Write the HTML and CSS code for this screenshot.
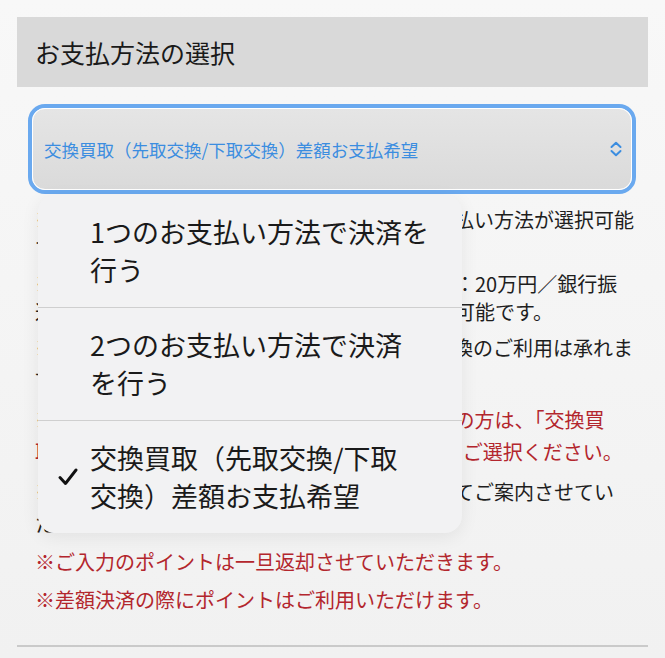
FILE: index.html
```html
<!DOCTYPE html>
<html lang="ja">
<head>
<meta charset="utf-8">
<title>お支払方法の選択</title>
<link rel="stylesheet" href="styles.css">
</head>
<body>
<div class="page">
  <div class="heading">お支払方法の選択</div>

  <div class="select-wrap">
    <div class="select">
      <div class="select-inner">
        <span class="select-value">交換買取（先取交換/下取交換）差額お支払希望</span>
        <svg class="chevrons" width="14" height="16" viewBox="0 0 14 16" aria-hidden="true">
          <path d="M2.5 6 L7 1.8 L11.5 6" fill="none" stroke="#3b8de0" stroke-width="2" stroke-linecap="round" stroke-linejoin="round"/>
          <path d="M2.5 10 L7 14.2 L11.5 10" fill="none" stroke="#3b8de0" stroke-width="2" stroke-linecap="round" stroke-linejoin="round"/>
        </svg>
      </div>
    </div>

    <div class="menu">
      <div class="menu-item">
        <span class="mark"></span>
        <span class="label">1つのお支払い方法で決済を<br>行う</span>
      </div>
      <div class="menu-item">
        <span class="mark"></span>
        <span class="label">2つのお支払い方法で決済<br>を行う</span>
      </div>
      <div class="menu-item">
        <span class="mark">
          <svg width="20" height="18" viewBox="0 0 20 18" aria-hidden="true">
            <path d="M2 9.5 L7.5 15.5 L18 2" fill="none" stroke="#111" stroke-width="2.9" stroke-linecap="round" stroke-linejoin="round"/>
          </svg>
        </span>
        <span class="label">交換買取（先取交換/下取<br>交換）差額お支払希望</span>
      </div>
    </div>
  </div>

  <div class="notes">
    <p>※お客様のご注文の内容に応じて、以下のお支払い方法が選択可能<br>です。</p>
    <p>※ご利用可能な上限金額は、クレジットカード：20万円／銀行振<br>込：上限なし、代金引換：各上限額までご利用可能です。</p>
    <p>※ご注文の内容によっては、先取交換・下取交換のご利用は承れま<br>せん。</p>
    <p class="red wide lead">※交換にて差額のお支払いが必要となるお客様の方は、「交換買<br>取（先取交換/下取交換）差額お支払い希望」をご選択ください。</p>
    <p class="wide">※差額につきましては、ご注文確認後メールにてご案内させてい<br>ただきます。</p>
    <p class="red">※ご入力のポイントは一旦返却させていただきます。</p>
    <p class="red spaced">※差額決済の際にポイントはご利用いただけます。</p>
  </div>

  <div class="rule"></div>
</div>
</body>
</html>
```

FILE: styles.css
```css
html, body {
  margin: 0;
  padding: 0;
}

body {
  min-height: 658px;
  background: linear-gradient(to bottom, #f8f8f8, #f1f1f1);
  font-family: "Noto Sans CJK JP", "Noto Sans", sans-serif;
  color: #1c1c1c;
  overflow: hidden;
}

.page {
  padding: 17px 17px 0;
}

.heading {
  height: 70px;
  background: #d9d9d9;
  display: flex;
  align-items: center;
  padding-left: 18px;
  font-size: 25px;
  color: #1a1a1a;
}

.select-wrap {
  position: relative;
  margin: 17px 12px 0 11px;
}

.select {
  box-sizing: border-box;
  height: 90px;
  border: 4px solid #6aa9ef;
  border-radius: 17px;
}

.select-inner {
  box-sizing: border-box;
  height: 100%;
  border: 1px solid #ffffff;
  border-radius: 13px;
  background: linear-gradient(to bottom, #e5e5e5, #dadada);
  display: flex;
  align-items: center;
  justify-content: space-between;
  padding: 0 8px 0 11px;
}

.select-value {
  font-size: 17.5px;
  color: #3b8de0;
  white-space: nowrap;
}

.chevrons {
  display: block;
}

.menu {
  position: absolute;
  top: calc(100% + 1px);
  left: 10px;
  width: 424px;
  background: #f2f2f3;
  border-radius: 17px;
  box-shadow: 0 4px 18px rgba(0, 0, 0, 0.07);
  overflow: hidden;
  z-index: 2;
}

.menu-item {
  display: flex;
  align-items: center;
  padding: 18px 0 18px 20px;
  border-bottom: 1px solid #cfcfcf;
}

.menu-item:last-child {
  border-bottom: none;
}

.mark {
  width: 20px;
  margin-right: 12px;
  display: flex;
  align-items: center;
  justify-content: center;
}

.label {
  font-size: 27px;
  line-height: 38px;
  color: #1a1a1a;
  white-space: nowrap;
}

.notes {
  margin-top: 12px;
  padding-left: 18px;
}

.notes p {
  margin: 0 0 8px;
  font-size: 20px;
  line-height: 28px;
  color: #1e1e1e;
  white-space: nowrap;
}

.notes p.wide {
  line-height: 32px;
}

.notes p.lead {
  margin-top: 14px;
}

.notes p.spaced {
  margin-top: 10px;
}

.notes p.red {
  color: #b3262d;
}

.notes p:last-child {
  margin-bottom: 0;
}

.rule {
  margin-top: 31px;
  height: 2px;
  background: #cacaca;
}
```
